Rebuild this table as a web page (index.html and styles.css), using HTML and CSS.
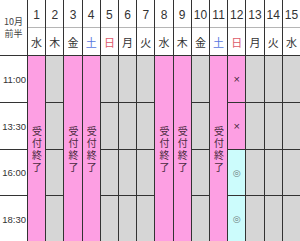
FILE: index.html
```html
<!DOCTYPE html>
<html lang="ja">
<head>
<meta charset="utf-8">
<link rel="stylesheet" href="styles.css">
</head>
<body>
<div class="cal">
  <div class="corner"><span>10月<br>前半</span></div>
  <div class="time">11:00</div>
  <div class="time">13:30</div>
  <div class="time">16:00</div>
  <div class="time">18:30</div>

  <div class="num">1</div><div class="day">水</div><div class="closed"><span class="vt">受付終了</span></div>
  <div class="num">2</div><div class="day">木</div><div class="off"></div><div class="off"></div><div class="off"></div><div class="off"></div>
  <div class="num">3</div><div class="day">金</div><div class="closed"><span class="vt">受付終了</span></div>
  <div class="num">4</div><div class="day sat">土</div><div class="closed"><span class="vt">受付終了</span></div>
  <div class="num">5</div><div class="day sun">日</div><div class="off"></div><div class="off"></div><div class="off"></div><div class="off"></div>
  <div class="num">6</div><div class="day">月</div><div class="off"></div><div class="off"></div><div class="off"></div><div class="off"></div>
  <div class="num">7</div><div class="day">火</div><div class="off"></div><div class="off"></div><div class="off"></div><div class="off"></div>
  <div class="num">8</div><div class="day">水</div><div class="closed"><span class="vt">受付終了</span></div>
  <div class="num">9</div><div class="day">木</div><div class="closed"><span class="vt">受付終了</span></div>
  <div class="num">10</div><div class="day">金</div><div class="off"></div><div class="off"></div><div class="off"></div><div class="off"></div>
  <div class="num">11</div><div class="day sat">土</div><div class="closed"><span class="vt">受付終了</span></div>
  <div class="num">12</div><div class="day sun">日</div>
  <div class="full">×</div><div class="full">×</div><div class="open">◎</div><div class="open">◎</div>
  <div class="num">13</div><div class="day">月</div><div class="off"></div><div class="off"></div><div class="off"></div><div class="off"></div>
  <div class="num">14</div><div class="day">火</div><div class="off"></div><div class="off"></div><div class="off"></div><div class="off"></div>
  <div class="num">15</div><div class="day">水</div><div class="off"></div><div class="off"></div><div class="off"></div><div class="off"></div>
</div>
</body>
</html>
```

FILE: styles.css
```css
html, body {
  margin: 0;
  padding: 0;
  background: #ffffff;
}
.cal {
  width: 300px;
  display: grid;
  grid-template-columns: 27px repeat(15, 1fr);
  grid-template-rows: 28px 28px 47px 47px 46px 47px;
  grid-auto-flow: column;
  column-gap: 1px;
  background: #333333;
  font-family: "Liberation Sans", "Noto Sans CJK JP", sans-serif;
  color: #333333;
}
.cal > div {
  box-sizing: border-box;
  border-bottom: 1px solid #333333;
  display: flex;
  align-items: center;
  justify-content: center;
}
.corner {
  grid-row: span 2;
  background: #ffffff;
  font-family: "Noto Sans CJK JP", sans-serif;
  font-size: 9px;
  line-height: 12px;
  text-align: center;
  color: #444444;
}
.time {
  background: #ffffff;
  justify-content: flex-end !important;
  padding-right: 1px;
  font-size: 9.5px;
  color: #333333;
}
.num {
  background: #ffffff;
  font-size: 12px;
  color: #333333;
  border-bottom-color: #b5b5b5 !important;
  padding-top: 2px;
}
.day {
  background: #ffffff;
  font-family: "Noto Sans CJK JP", sans-serif;
  font-size: 11px;
  color: #333333;
}
.day.sat { color: #5a78e0; }
.day.sun { color: #dd5a6a; }
.off {
  background: #d6d6d6;
}
.closed {
  grid-row: span 4;
  background: #fd9fe3;
  font-family: "Noto Sans CJK JP", sans-serif;
  font-size: 10px;
  color: #4a2a40;
  padding-top: 2px;
}
.vt {
  writing-mode: vertical-rl;
  letter-spacing: 2px;
  line-height: 1;
}
.full {
  background: #fd9fe3;
  font-size: 11px;
  color: #4a2a40;
}
.open {
  background: #ccfcfc;
  font-family: "DejaVu Sans", sans-serif;
  font-size: 9px;
  color: #6f7f7f;
}
```
